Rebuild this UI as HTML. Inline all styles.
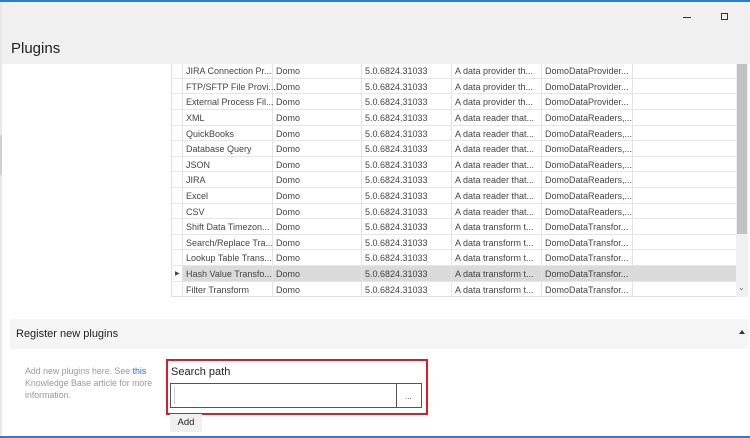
<!DOCTYPE html>
<html><head><meta charset="utf-8"><style>
*{margin:0;padding:0;box-sizing:border-box}
body{width:750px;height:438px;overflow:hidden;background:#fff;font-family:"Liberation Sans",sans-serif;position:relative}
.abs{position:absolute}
.row{position:absolute;left:171px;width:565px;height:15.6px;border-bottom:1px solid #e6e6e6;font-size:9px;color:#444}
.row span{position:absolute;top:3px;white-space:nowrap}
.row i{position:absolute;top:0;bottom:0;width:1px;background:#e3e3e3}
.c0{left:15px}.c1{left:105px}.c2{left:194px}.c3{left:284px}.c4{left:374px}
.sel{background:linear-gradient(to right,#fff 11px,#dadada 11px)}
</style></head><body>
<div class="row" style="top:63.2px"><i style="left:11px"></i><i style="left:101px"></i><i style="left:190px"></i><i style="left:280px"></i><i style="left:370px"></i><i style="left:461px"></i><span class="c0">JIRA Connection Pr...</span><span class="c1">Domo</span><span class="c2">5.0.6824.31033</span><span class="c3">A data provider th...</span><span class="c4">DomoDataProvider...</span></div>
<div class="row" style="top:78.8px"><i style="left:11px"></i><i style="left:101px"></i><i style="left:190px"></i><i style="left:280px"></i><i style="left:370px"></i><i style="left:461px"></i><span class="c0">FTP/SFTP File Provi...</span><span class="c1">Domo</span><span class="c2">5.0.6824.31033</span><span class="c3">A data provider th...</span><span class="c4">DomoDataProvider...</span></div>
<div class="row" style="top:94.4px"><i style="left:11px"></i><i style="left:101px"></i><i style="left:190px"></i><i style="left:280px"></i><i style="left:370px"></i><i style="left:461px"></i><span class="c0">External Process Fil...</span><span class="c1">Domo</span><span class="c2">5.0.6824.31033</span><span class="c3">A data provider th...</span><span class="c4">DomoDataProvider...</span></div>
<div class="row" style="top:110px"><i style="left:11px"></i><i style="left:101px"></i><i style="left:190px"></i><i style="left:280px"></i><i style="left:370px"></i><i style="left:461px"></i><span class="c0">XML</span><span class="c1">Domo</span><span class="c2">5.0.6824.31033</span><span class="c3">A data reader that...</span><span class="c4">DomoDataReaders,...</span></div>
<div class="row" style="top:125.6px"><i style="left:11px"></i><i style="left:101px"></i><i style="left:190px"></i><i style="left:280px"></i><i style="left:370px"></i><i style="left:461px"></i><span class="c0">QuickBooks</span><span class="c1">Domo</span><span class="c2">5.0.6824.31033</span><span class="c3">A data reader that...</span><span class="c4">DomoDataReaders,...</span></div>
<div class="row" style="top:141.2px"><i style="left:11px"></i><i style="left:101px"></i><i style="left:190px"></i><i style="left:280px"></i><i style="left:370px"></i><i style="left:461px"></i><span class="c0">Database Query</span><span class="c1">Domo</span><span class="c2">5.0.6824.31033</span><span class="c3">A data reader that...</span><span class="c4">DomoDataReaders,...</span></div>
<div class="row" style="top:156.8px"><i style="left:11px"></i><i style="left:101px"></i><i style="left:190px"></i><i style="left:280px"></i><i style="left:370px"></i><i style="left:461px"></i><span class="c0">JSON</span><span class="c1">Domo</span><span class="c2">5.0.6824.31033</span><span class="c3">A data reader that...</span><span class="c4">DomoDataReaders,...</span></div>
<div class="row" style="top:172.4px"><i style="left:11px"></i><i style="left:101px"></i><i style="left:190px"></i><i style="left:280px"></i><i style="left:370px"></i><i style="left:461px"></i><span class="c0">JIRA</span><span class="c1">Domo</span><span class="c2">5.0.6824.31033</span><span class="c3">A data reader that...</span><span class="c4">DomoDataReaders,...</span></div>
<div class="row" style="top:188px"><i style="left:11px"></i><i style="left:101px"></i><i style="left:190px"></i><i style="left:280px"></i><i style="left:370px"></i><i style="left:461px"></i><span class="c0">Excel</span><span class="c1">Domo</span><span class="c2">5.0.6824.31033</span><span class="c3">A data reader that...</span><span class="c4">DomoDataReaders,...</span></div>
<div class="row" style="top:203.6px"><i style="left:11px"></i><i style="left:101px"></i><i style="left:190px"></i><i style="left:280px"></i><i style="left:370px"></i><i style="left:461px"></i><span class="c0">CSV</span><span class="c1">Domo</span><span class="c2">5.0.6824.31033</span><span class="c3">A data reader that...</span><span class="c4">DomoDataReaders,...</span></div>
<div class="row" style="top:219.2px"><i style="left:11px"></i><i style="left:101px"></i><i style="left:190px"></i><i style="left:280px"></i><i style="left:370px"></i><i style="left:461px"></i><span class="c0">Shift Data Timezon...</span><span class="c1">Domo</span><span class="c2">5.0.6824.31033</span><span class="c3">A data transform t...</span><span class="c4">DomoDataTransfor...</span></div>
<div class="row" style="top:234.8px"><i style="left:11px"></i><i style="left:101px"></i><i style="left:190px"></i><i style="left:280px"></i><i style="left:370px"></i><i style="left:461px"></i><span class="c0">Search/Replace Tra...</span><span class="c1">Domo</span><span class="c2">5.0.6824.31033</span><span class="c3">A data transform t...</span><span class="c4">DomoDataTransfor...</span></div>
<div class="row" style="top:250.4px"><i style="left:11px"></i><i style="left:101px"></i><i style="left:190px"></i><i style="left:280px"></i><i style="left:370px"></i><i style="left:461px"></i><span class="c0">Lookup Table Trans...</span><span class="c1">Domo</span><span class="c2">5.0.6824.31033</span><span class="c3">A data transform t...</span><span class="c4">DomoDataTransfor...</span></div>
<div class="row sel" style="top:266px"><span style="left:4px;top:4px;font-size:6px">&#9654;</span><i style="left:11px"></i><i style="left:101px"></i><i style="left:190px"></i><i style="left:280px"></i><i style="left:370px"></i><span class="c0">Hash Value Transfo...</span><span class="c1">Domo</span><span class="c2">5.0.6824.31033</span><span class="c3">A data transform t...</span><span class="c4">DomoDataTransfor...</span></div>
<div class="row" style="top:281.6px"><i style="left:11px"></i><i style="left:101px"></i><i style="left:190px"></i><i style="left:280px"></i><i style="left:370px"></i><i style="left:461px"></i><span class="c0">Filter Transform</span><span class="c1">Domo</span><span class="c2">5.0.6824.31033</span><span class="c3">A data transform t...</span><span class="c4">DomoDataTransfor...</span></div>

<div class="abs" style="left:0;top:0;width:750px;height:2px;background:#2b7cd3"></div>
<div class="abs" style="left:0;top:2px;width:750px;height:62px;background:#f0f0f0"></div>
<div class="abs" style="left:0;top:2px;width:2px;height:434px;background:#e8e8e8"></div>
<div class="abs" style="left:0;top:135px;width:2px;height:40px;background:#d0d0d0"></div>
<div class="abs" style="left:11px;top:40px;font-size:15px;color:#222">Plugins</div>
<div class="abs" style="left:683px;top:17px;width:8px;height:1px;background:#333"></div>
<div class="abs" style="left:721px;top:13px;width:7px;height:7px;border:1px solid #333"></div>

<div class="abs" style="left:171px;top:64px;width:1px;height:233px;background:#e0e0e0"></div>
<div class="abs" style="left:171px;top:296px;width:565px;height:1px;background:#e0e0e0"></div>
<div class="abs" style="left:736px;top:64px;width:12px;height:233px;background:#f0f0f0"></div>
<div class="abs" style="left:737px;top:64px;width:10px;height:170px;background:#c1c1c1"></div>
<div class="abs" style="left:738px;top:283px;font-size:8px;color:#666">&#8964;</div>

<div class="abs" style="left:10px;top:319px;width:738px;height:30px;background:#f5f5f5"></div>
<div class="abs" style="left:16px;top:328px;font-size:11px;color:#222">Register new plugins</div>
<div class="abs" style="left:739px;top:330px;width:0;height:0;border-left:3px solid transparent;border-right:3px solid transparent;border-bottom:4px solid #333"></div>
<div class="abs" style="left:25px;top:365px;width:135px;font-size:8.8px;line-height:12px;color:#999">Add new plugins here. See <span style="color:#2b6fc4">this</span> Knowledge Base article for more information.</div>
<div class="abs" style="left:166px;top:359px;width:262px;height:56px;border:2px solid #d81e2c"></div>
<div class="abs" style="left:171px;top:366px;font-size:11px;color:#222">Search path</div>
<div class="abs" style="left:170px;top:383px;width:252px;height:25px;border:1px solid #555;background:#fff"></div>
<div class="abs" style="left:174px;top:387px;width:1px;height:17px;background:#ccc"></div>
<div class="abs" style="left:396px;top:383px;width:1px;height:25px;background:#555"></div>
<div class="abs" style="left:405px;top:392px;font-size:8px;color:#555">...</div>
<div class="abs" style="left:170px;top:414px;width:32px;height:18px;background:#f0f0f0;font-size:9.5px;color:#222;text-align:center;line-height:18px">Add</div>
<div class="abs" style="left:0;top:436px;width:750px;height:2px;background:#2b7cd3"></div>
</body></html>
